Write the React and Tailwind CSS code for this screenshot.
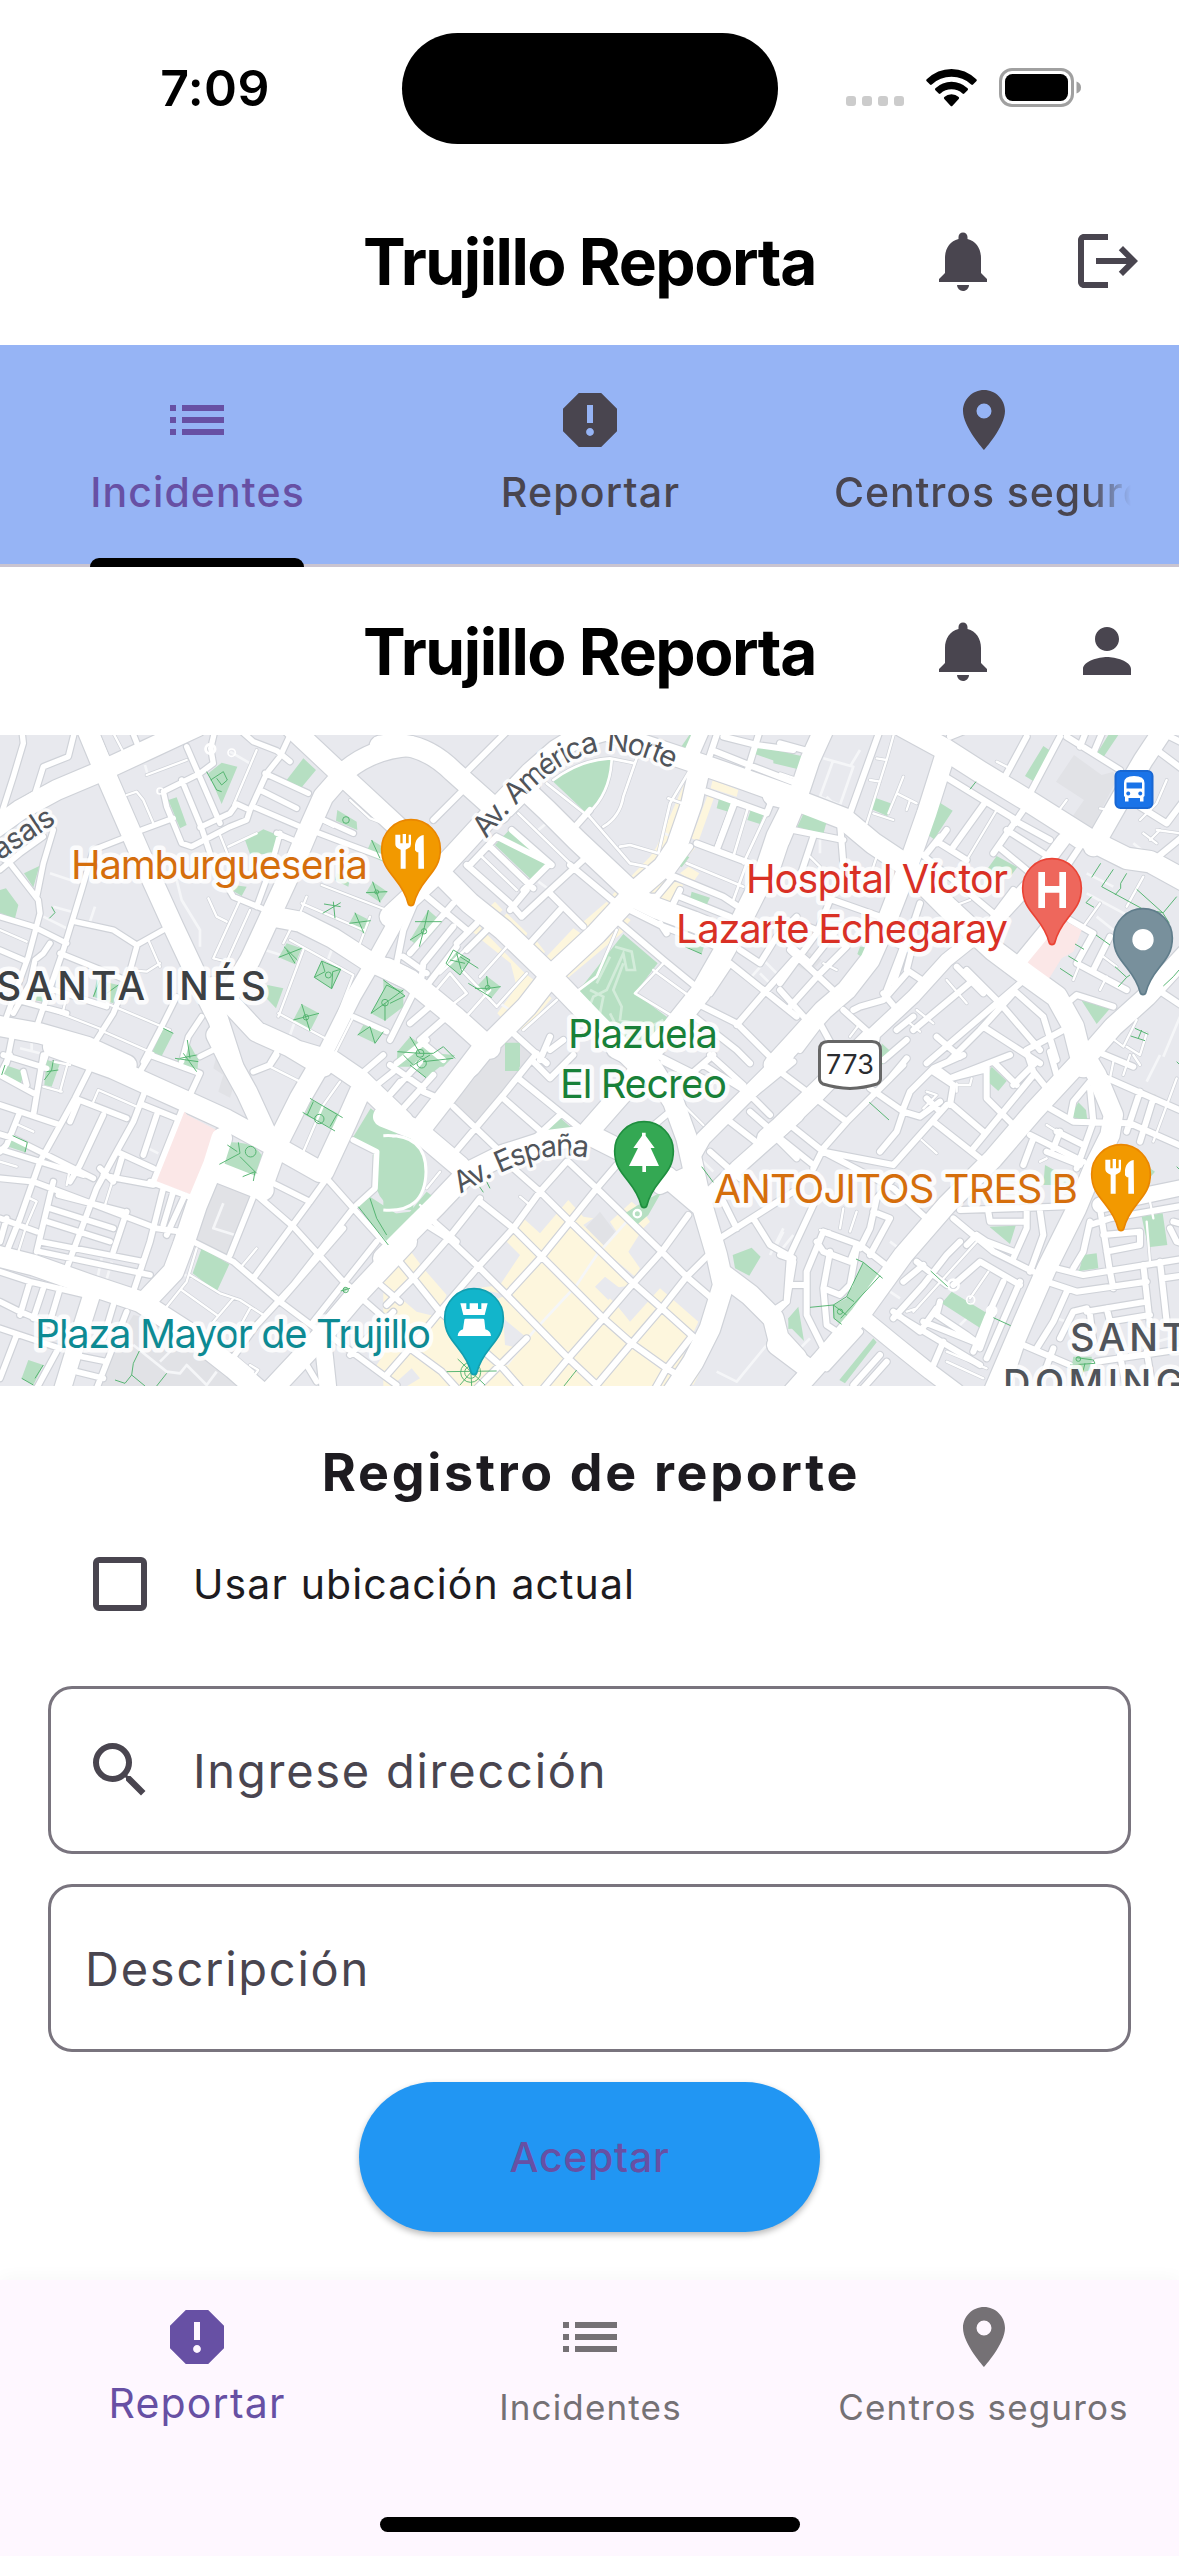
import {
  MdList,
  MdLocationOn,
  MdLogout,
  MdNotifications,
  MdPerson,
  MdReport,
  MdSearch,
} from "react-icons/md";

/*
 * City map. Each tile is drawn on its own grid, three units per screen pixel,
 * and placed at (x, y) inside the map view.
 * roads: [width, path]   parks / shops / clinics / plots: filled areas
 * alleys: faint streets  paths: footpaths inside parks
 */
const TILES = [
  {
    x: 0,
    y: -5,
    roads: [
      [60, "M262 0 320 140 420 370 520 590 600 760 655 870 700 1010 M-30 305 60 240 170 180 300 125 440 60 590 -10 M860 -20 1020 130 1220 315 M1230 48Q1120 55 1040 120 M1040 120 970 200 925 300 870 430 810 560 750 690 690 790 M640 770 700 830 770 905 870 950 970 1010 M820 560 900 575 1000 625 1100 690 1210 740 M-20 885 120 910 260 950 380 1005"],
      [44, "M1230 500 1130 680 1060 800 955 1010"],
      [16, "M65 -5 70 40 40 140 0 265 M225 0 205 80 130 110 105 190 40 230 0 300 M395 0 425 75 M425 300 520 265 M560 50 660 280 M645 0 632 55 640 100 600 130 490 185 500 230 545 340 575 350 690 290 740 270 750 240 800 130 840 80 875 5 M600 292 690 250 710 222 745 238 M720 0 760 35 830 62 870 95 M760 230 900 290 M795 130 925 190 M780 180 890 235 M945 305 1010 330 1210 405 M545 150 605 295 640 400 700 500 785 535 M840 310 810 420 770 530 M830 310 890 335 M225 575 340 600 410 645 490 600 M160 300 130 400 110 500 M0 380 30 400 115 510 120 550 85 680 20 860 M370 325 280 360 245 480 190 660 110 890 M0 560 100 590 200 640 M150 640 130 670 105 690 90 760 40 850 M410 650 385 740 340 850 280 945 M180 670 390 755 M0 660 70 690 M130 770 320 830 M50 810 200 850 M530 800 490 880 430 995 M605 860 565 920 545 995 M0 420 60 370 130 320 M960 265 1060 310 M1060 860 1160 905 M40 900 20 1000 M150 940 130 1000 M840 950 810 1000 M660 950 600 980"],
      [7, "M290 0 330 95 M335 0 380 85 M440 135 560 90 M380 195 410 185 430 210 460 280 M770 60 700 225 M660 315 690 390 M685 350 770 310 M0 600 80 635 M445 630 480 710 M385 720 440 725 480 700 M905 520 1090 600 M965 465 1160 540 M900 550 920 500 M850 640 870 600 M870 630 1060 735 M910 660 835 860 M835 850 985 930 1060 735 M200 800 190 840 M320 820 510 900 M130 830 310 900 M300 900 460 970 M940 260 1000 290 M1050 210 1110 265 1150 280 M720 510 640 685 680 695 750 540 M625 505 650 560 680 575 M1080 640 1110 560 M990 1000 1060 860"],
    ],
    alleys: "M435 105 445 140 M690 65 750 100 M150 430 240 460 M285 530 270 575 M530 450 545 510 600 600 600 650 M160 530 215 545 M130 560 210 600 M60 955 120 970 M95 930 95 960 M795 660 860 680 M995 660 980 700 M890 860 870 915",
    parks: "M665 98 712 110 665 222 625 130Z M910 85 948 120 905 172 860 150Z M505 210 530 202 560 285 540 295Z M790 298 840 318 820 372 750 372 735 330Z M0 480 18 475 55 525 45 565 0 548Z M72 430 118 408 100 472Z M1012 240 1070 275 1072 300 1008 272Z M1115 330 1180 370 1150 395 1098 370Z M1118 455 1162 485 1140 517 1098 488Z M1065 548 1112 572 1092 610 1048 580Z M860 640 905 655 885 703 836 682Z M965 693 1022 718 995 776 943 742Z M802 765 850 775 828 835 795 800Z M905 822 957 850 930 903 880 870Z M1160 765 1210 780 1210 830 1155 872 1113 850Z M1090 885 1150 905 1125 940 1073 915Z M490 895 520 910 485 978 458 965Z M562 930 592 985 540 990Z M700 465 740 470 725 498 695 480Z M290 750 355 765 340 820 280 800Z M105 770 130 775 130 815 100 810Z M1010 430 1050 445 1045 470 1005 450Z",
    paths: "M620 125 650 180 665 185 M632 150 670 125 682 150 665 165 650 145 M1115 330 1140 385 M1098 488 1162 485 M1118 455 1140 517 M972 522 1022 530 M1000 515 1005 565 M968 550 1022 518 M1048 580 1112 572 M1065 548 1092 610 M836 682 905 655 M860 660 885 700 M852 650 892 690 M943 742 965 693 1022 718 995 776Z M965 693 975 725 943 742 M1022 718 998 725 995 776 M880 870 957 850 M905 822 930 903 M1113 850 1160 765 1200 785 M1113 850 1155 820 1210 780 M1155 820 1155 872 M1073 915 1110 890 1125 940 1150 905 M155 530 165 548 148 565 M490 895 520 910 M540 985 590 975 M562 930 570 985 M280 800 300 750 M320 790 355 765",
    rings: [[985, 735, 9], [1155, 818, 10], [1130, 486, 6], [918, 862, 8], [1038, 270, 10]],
    whiteRings: [[631, 57, 14, 9], [695, 68, 11, 5], [480, 183, 9, 5]],
  },
  {
    x: 390,
    y: -5,
    roads: [
      [62, "M-30 48Q90 25 190 125L330 250 M0 560 140 430 210 355 320 235 420 130 500 60 590 5 M660 5 760 45 880 85 1040 140 1220 205 M140 420 240 520 340 600 480 735 620 880 740 1000 M390 165 470 240 560 330 640 405 730 490 M730 500 800 535 910 575 1020 620 M930 110 905 220 860 350 820 410 740 480 620 610 480 740 410 830 280 960 240 1010 M1220 200 1160 320 1120 440 1060 560 1010 650 930 790 850 890 750 1000 M-10 715 60 750 200 865 300 955"],
      [46, "M900 80 935 0 M540 40 660 5"],
      [18, "M360 250 440 170 M225 130 350 5 M130 270 215 185 M560 285 600 240 M320 320 480 400 400 480 M365 300 485 405 M300 350 430 475 M235 410 320 320 M230 405 360 520 395 560 470 490 590 380 M540 405 690 530 M480 490 580 590 M360 540 410 480 M420 640 510 540 M110 500 230 600 M60 670 190 520 M200 640 260 580 M40 600 70 530 M20 700 40 600 M40 680 110 730 M95 740 100 700 190 590 M230 660 290 600 M100 780 200 650 M965 60 1090 110 1220 160 M985 0 955 90 M1110 0 1070 130 M1000 20 1100 45 1210 60 M950 185 1130 250 1150 200 M920 340 1080 400 M855 440 1000 500 1060 540 M835 440 900 350 M850 440 800 500 770 500 M980 360 1035 215 M685 575 820 690 930 780 M720 540 820 590 980 650 M830 610 810 580 M870 500 1020 560 M870 480 850 520 M1050 660 1110 700 1160 620 1220 560 M900 850 1040 960 1080 1000 M920 820 1040 880 1150 990 M1020 700 1220 860 M960 790 1020 700 M1040 885 1130 780 1210 690 M0 930 70 790 M60 880 130 820 M90 930 170 860 M100 940 160 990 M20 1000 110 930 M370 910 470 1000 M480 960 520 930 M450 990 480 920"],
      [8, "M385 250 550 410 M270 375 380 480 M470 160 590 255 560 290 M590 250 720 400 770 410 M490 150Q570 90 660 85L735 100 M665 90Q660 190 595 250 M740 85 700 200 Q690 260 640 290 M690 350 720 345 805 370 840 220 900 120 M835 205 890 225 M1030 210 975 360 M1075 230 1030 380 M1130 250 1060 400 M150 730 235 650 M130 790 180 730 230 790 180 830 M215 720 320 830 M220 870 300 780 M270 740 360 640 M320 830 410 730 M400 900 500 810 M890 400 1060 470 M1030 510 1070 400 M560 785 620 740 680 600 M820 700 735 790 850 860 M790 720 900 800"],
    ],
    alleys: "M445 300 475 275 M445 455 480 480 M330 820 360 840 M1085 740 1120 700 M1110 680 1170 740 M1110 730 1150 770 M825 310 850 325",
    parks: "M490 155Q560 88 668 88Q660 190 588 248Z M360 298 468 400 425 450 315 345Z M898 15 930 15 912 65 875 48Z M1105 50 1210 75 1210 112 1095 72Z M988 202 1028 212 1015 245 980 235Z M1082 240 1122 250 1110 282 1072 270Z M905 485 960 503 945 535 898 515Z M878 370 898 382 875 412 858 400Z M115 540 155 575 88 650 60 630Z M190 660 240 690 210 735 168 700Z M290 738 332 770 305 803 255 775Z M-20 750 45 798 -20 850Z M345 938 390 938 390 1010 345 1010Z M60 920 130 970 195 975 160 1010 20 1010 22 965Z M895 612 945 640 935 672 880 645Z M700 612 803 700 735 790 832 862 790 930 740 960 610 850 560 790Z",
    shops: "M900 125 925 130 885 280 820 370 745 450 722 440 780 380 800 350 870 190Z M968 150 1045 180 1040 200 962 175Z M955 190 975 195 925 335 905 325Z M900 345 915 355 850 425 838 415Z M870 430 895 410 928 430 910 455Z M830 432 842 442 785 500 768 488Z M855 455 880 465 840 530 800 512Z M733 525 818 575 815 590 715 545Z M700 555 722 570 705 590 685 575Z M315 515 338 540 320 556 297 532Z M350 550 412 610 402 632 332 570Z M430 620 465 665 455 680 412 642Z M550 595 575 612 485 710 460 690Z M650 515 660 525 590 595 572 582Z M680 480 694 492 680 508 664 498Z M255 575 275 595 260 615 240 600Z M290 612 405 730 438 755 340 870 322 850 380 770 362 700 275 630Z M690 595 700 605 520 755 515 745 600 650Z M475 795 485 805 400 905 388 895Z",
    plots: "M240 990 370 910 450 970 420 1010 240 1010Z",
    paths: "M115 540 100 605 60 630 M75 575 155 575 M100 605 88 650 M168 700 190 660 240 690 210 735Z M180 690 225 700 M200 670 215 725 M210 680 265 715 M235 760 305 803 M290 738 295 775 332 770 M255 775 295 775 M-20 750 45 798 0 820 M60 920 90 970 22 965 M90 970 130 970 160 950 195 985 M885 650 935 672 M890 630 945 645",
    rings: [[102, 604, 8], [293, 773, 7], [90, 970, 12]],
    parkAlleys: "M675 650 725 665 735 720 710 720 700 670 650 780 610 800 590 850 M700 700 670 780 695 830 690 870 780 890 820 870 M660 680 620 760 M600 780 640 800 630 850 M660 850 680 890 720 920 M600 820 560 800",
  },
  {
    x: 780,
    y: -5,
    roads: [
      [64, "M370 -10 490 55 600 125 740 210 850 280 930 330 1040 385 1110 395 1220 455 M-20 195 60 215 190 265 280 340 370 400 500 530 640 660 740 735 830 800 880 890 910 1010"],
      [58, "M140 -20 90 90 50 210 0 330 M500 60 440 250 380 420 310 600 270 690 200 780 130 840 40 940 -20 1005 M1150 0 1090 90 1020 210 940 350 M1220 670 1100 800 1000 890 930 970 900 1010"],
      [40, "M850 330 760 450 650 570 500 690 400 800 250 940 M830 560 715 700"],
      [18, "M0 40 90 65 M300 0 210 250 M480 130 700 265 M560 0 510 20 M740 20 670 150 M840 20 750 190 M860 20 1020 120 M920 0 900 50 M970 0 940 70 M1130 60 1210 120 M1150 10 1210 40 M730 240 640 370 M680 300 790 370 M700 270 810 330 M655 350 740 420 M480 340 560 390 M610 225 520 350 M500 300 470 340 M410 360 520 450 640 550 M480 320 440 370 M700 480 640 560 M40 300 190 330 M180 280 190 400 M100 320 60 440 M30 300 -10 420 M130 500 300 560 M150 510 110 610 0 760 M60 580 160 620 200 650 M30 660 180 800 M0 620 90 700 170 600 M30 830 120 730 200 650 M0 780 80 870 M300 620 370 650 320 780 M420 520 340 760 M400 640 380 720 440 760 M220 840 240 830 310 810 380 730 M310 790 360 850 M190 840 280 920 M560 720 660 820 780 960 M530 710 610 790 M700 790 600 900 510 990 M700 780 790 860 830 990 M610 890 780 1000 M740 960 850 900 M470 920 540 980 M440 1000 720 760 M350 900 400 860 M580 750 400 900 M860 820 890 795 1000 830 M860 810 830 830 M870 570 940 610 890 700 1040 780 M990 620 940 720 M1120 770 1210 830 M940 960 1060 1010 M60 960 120 880 180 990 M1110 400 1220 310 M1080 230 1160 280 1220 200 M870 330 900 350 860 410 M310 990 380 930"],
      [7, "M345 0 320 90 260 280 M290 85 320 90 M270 150 300 155 M370 140 350 190 410 220 M350 190 325 250 M390 210 380 240 M280 250 340 270 M650 95 690 115 M860 210 830 250 M960 235 985 240 M0 130 60 150 M650 240 560 390 M290 380 270 440 M90 380 120 410 110 440 M160 500 200 420 M1090 440 1040 530 M960 520 910 590 M960 780 980 740 M880 750 900 700 M970 680 1010 710 M990 920 1030 950 1070 870 M1040 950 1080 975 1100 910 M500 750 560 820 M410 840 460 880 M390 880 420 905 M210 920 240 880 M1080 270 1130 220 1160 150 M1090 310 1130 340 M1130 300 1200 310 M1110 330 1140 300 M130 700 170 720 M490 540 570 510"],
    ],
    alleys: "M160 90 120 200 180 225 220 110 130 85 M240 60 210 110 M140 200 160 220 M120 320 120 370 M1060 340 1110 380 M920 430 1000 470 M920 490 1050 560 M950 560 1000 600 M1200 860 1150 980",
    parks: "M-20 60 75 80 55 118 -20 100Z M790 48 820 68 768 158 735 138Z M985 15 1015 15 968 85 948 75Z M285 203 332 220 322 258 275 238Z M70 252 140 275 130 312 52 290Z M470 212 518 242 462 328 435 308Z M650 378 712 412 690 440 620 420Z M240 650 258 650 248 683 232 672Z M905 812 988 838 950 882Z M305 940 338 970 305 1005Z",
    clinics: "M850 570 905 600 880 665 845 685 803 752 738 702 780 630Z",
    plots: "M882 75 965 135 1000 125 1010 150 930 305 870 270 912 210 828 155Z M75 660 125 690 90 730 40 700Z",
    paths: "M588 155 570 178 M962 400 935 442 M1000 418 965 470 1090 538 1150 548 1190 500 M1040 430 1022 460 1022 475 1005 495 M1070 478 1148 548 1168 580 M935 500 918 518 942 532 M885 642 912 658 M865 678 893 695 M840 715 878 740 M948 615 990 645 M1005 710 1040 742 1015 770 M1050 735 1040 742 M1197 720 1180 740 1150 768 M1065 895 1105 913 M1052 918 1095 932 M1085 900 1075 925",
  },
  {
    x: 0,
    y: 320,
    roads: [
      [62, "M160 -25 340 40 460 95 560 140 680 195 800 260 960 350 M650 -60 690 20 740 110 800 240 M970 10 900 130 835 260 785 400 M1080 110 1040 200 970 350 M900 -10 1000 20 1080 75 1210 200 M-20 600 100 630 270 690 420 740 560 830 700 940 780 1010 M665 250 640 330 590 450 550 570 520 650 435 740 M650 350 790 405 M1220 560 1060 730 950 860 800 1020"],
      [50, "M275 720 240 830 185 1010 M970 870 985 1010"],
      [17, "M10 0 140 40 M130 0 100 180 M0 60 110 120 M70 50 80 90 M30 0 0 60 M0 150 60 170 180 210 M60 170 20 270 0 290 M-10 235 40 250 280 370 M280 20 225 130 120 320 60 490 20 590 M225 130 380 190 M235 140 210 200 M310 180 240 330 210 380 M-10 280 120 320 250 360 M0 370 100 380 260 440 470 520 540 530 M440 95 400 200 350 290 290 400 230 560 200 640 M430 150 530 190 M470 180 430 300 M350 290 460 340 M365 310 350 360 M310 360 350 370 460 390 M550 155 460 380 M450 380 580 430 M160 380 110 590 M175 420 370 470 M150 460 340 520 M140 500 330 560 M120 560 430 620 M120 590 450 660 M300 340 340 380 M490 400 450 560 400 710 M550 430 500 540 M520 410 490 510 M380 470 340 590 M0 490 110 530 M20 490 0 560 M0 650 90 680 260 720 M90 680 60 780 M130 700 100 790 M180 700 150 800 M0 740 60 770 250 850 M0 820 180 880 M50 840 0 970 M170 890 110 1000 M220 900 320 920 M230 950 310 970 M340 750 310 850 M380 770 290 1000 M770 420 880 515 1030 680 1080 720 M770 400 690 600 M800 375 930 440 M930 440 980 370 M980 370 1060 460 1150 560 M1060 460 880 690 770 810 690 920 M930 440 760 670 M580 560 700 620 840 740 960 830 M840 740 1030 520 M1130 560 940 800 M1060 255 1130 290 1125 400 1070 450 M420 50 450 0 600 55 570 120 M760 50 810 30 830 0 M1000 0 1080 60 1150 0 M1160 130 1200 80 M1130 90 1180 50 M1000 850 1190 990 M1050 900 1180 770 M1085 730 1200 830 M1130 680 1200 740 M920 930 950 980"],
      [7, "M210 0 180 110 M160 20 210 30 M130 95 185 110 M280 140 295 105 410 155 M810 35 900 80 M1020 80 970 150 M970 150 910 290 M340 370 315 450 M90 430 110 440 80 510 55 590 M45 205 100 230 M0 320 50 335 M590 580 560 680 480 780 M545 705 650 780 M570 660 660 715 720 735 790 780 M700 730 640 800 M750 760 700 850 M770 580 720 640 M210 340 200 390 M700 900 760 950 M750 930 775 945 760 965"],
    ],
    alleys: "M435 275 475 295 M670 445 640 520 705 540 M305 610 290 680 M335 620 315 690 M540 655 580 670 M480 920 540 860 M400 870 500 950 540 955 560 930 620 990 650 950 M330 890 400 870",
    parks: "M15 30 75 50 60 90 5 60Z M140 15 180 25 155 95 133 90Z M530 15 560 -5 595 10 592 55Z M38 242 82 262 75 292 25 275Z M690 262Q760 260 785 300L760 378 658 335Z M935 135 1022 180 1005 225 915 180Z M1112 160 1198 230 1130 285 1060 245Z M1120 300Q1150 240 1240 240V465Q1120 470 1125 350Z M1075 455 1110 425 1210 490 1168 570Z M605 580 688 628 650 710 578 655Z M85 915 130 930 100 990 65 970Z M1020 700 1050 690 1040 720Z",
    shops: "M1180 625 1210 640 1210 690 1165 650Z M1180 755 1210 770 1210 1010 1165 985 1120 945 1150 900 1165 850 1155 790Z",
    clinics: "M548 163 562 180 655 228 575 420 462 378Z",
    plots: "M650 375 755 420 685 600 585 555Z M650 0 705 80 690 128 655 110 670 60 640 40Z M400 780 450 790 700 960 760 1010 290 1010 330 900Z",
    paths: "M160 15 155 45 133 75 M140 50 175 45 M15 30 5 60 M38 242 82 262 75 292 M658 328 720 295 715 262 M682 270 712 290 M720 305 770 355 M728 365 765 350 760 378 M930 130 1028 188 M908 172 1005 228 M940 140 922 180 M1010 180 990 215 M1075 455 1165 570 M1110 430 1130 490 1160 540 M525 10 595 20 M550 -5 590 50 M418 888 400 925 395 960 435 993 M395 960 375 985 345 975 M500 955 470 993 M130 930 105 970 M65 970 100 990 M1022 708 1050 700",
    rings: [[752, 290, 16], [958, 192, 14], [1037, 705, 8]],
  },
  {
    x: 390,
    y: 320,
    roads: [
      [62, "M-20 185 80 225 210 335 M-20 610 60 530 140 450 230 355 340 300 480 255 600 240 700 290 830 365 930 450 M590 235 700 110 760 30 M680 -20 780 30 850 140 890 250 930 430 980 600 1000 690 960 820 910 920 850 1010 M270 -10 190 95 85 230 M1000 660 1080 720 1150 790 1165 850 1220 910"],
      [44, "M1190 0 1080 110 940 250 900 320 M1220 180 1040 340 940 440 M810 395 910 350"],
      [18, "M535 320 620 400 815 590 890 665 960 725 M370 340 450 410 540 500 730 685 815 760 910 845 M270 440 370 520 455 605 640 790 725 865 830 940 880 970 M110 510 175 550 265 635 350 720 535 910 620 990 M20 610 70 670 150 770 330 930 400 1010 M-10 820 60 880 155 950 200 1000 M680 330 620 400 540 500 455 605 350 720 M530 320 450 410 370 520 265 635 150 770 60 880 -10 960 M270 430 175 550 70 670 -10 750 M895 480 815 590 730 685 640 790 535 910 460 1000 M955 600 890 665 815 760 725 865 620 990 M905 845 830 940 790 1010 M120 490 200 560 M340 130 500 270 M385 70 570 220 M440 -5 340 120 180 310 M190 155 320 280 M510 180 440 245 M840 170 780 220 M0 30 100 100 M-10 130 90 20 M100 110 170 140 M30 170 130 60 M800 0 960 80 M820 20 900 60 M940 30 1070 110 1140 180 M960 0 1060 90 M900 60 970 0 M950 240 1100 110 1210 20 M1020 200 1110 270 M1080 170 1160 240 M990 550 1210 410 M1090 490 1140 570 1210 610 M1210 620 1190 740 1160 770 M960 290 1050 370 M1160 250 1220 310 M1000 440 1040 520 M430 20 480 70 550 0 M410 850 330 930 260 1000 M260 870 330 930"],
      [7, "M390 425 420 450 M870 140 940 210 M150 350 110 400 M90 450 120 480"],
    ],
    alleys: "M710 500 620 600 560 690 430 830 350 930 M1180 520 1140 600 M1130 870 1040 980 980 950 M930 310 970 350",
    parks: "M510 188 558 230 560 245 440 240Z M-20 250Q105 235 108 350Q105 470 -20 462Z M110 410 130 425 0 560 -20 560 -20 480 60 470Z M1085 578 1112 605 1078 662 1035 640 1028 600Z M25 0 195 0 108 68Z M345 -5 388 -5 388 48 345 48Z M815 410 775 480 740 510 705 475 760 440Z M1195 790 1220 780 1220 820 1195 822Z",
    shops: "M535 435 580 485 610 490 580 510 660 590 645 590 540 505 450 610 350 720 260 700 330 690 390 600 345 555 370 525 400 490 450 535Z M545 500 645 590 740 690 660 700 620 690 680 750 720 800 810 700 925 800 830 1010 -20 1010 -20 900 60 850 150 770 200 780 350 720 450 605Z M725 440 760 470 780 500 760 520 715 590 750 640 735 665 640 585 680 530 660 500Z M55 580 100 640 170 720 150 770 20 610Z M10 620 60 670 20 720 80 770 160 790 60 870 -20 800 -20 650Z M960 850 975 860 910 990 890 980Z",
    plots: "M310 0 420 0 260 210 185 155Z M630 470 675 530 640 585 575 530Z",
    blocks: "M645 665 690 700 655 735 615 695Z M715 700 765 745 720 795 680 750Z M340 790 412 850 390 880 345 870Z M65 940 90 970 40 1000 20 980Z",
    paths: "M170 950 320 948 M203 912 285 990 M240 900 245 993 M210 990 270 920 M560 945 522 993 M935 335 970 382 M265 390 280 412 M290 380 300 400 M40 0 70 30 120 0 M100 20 190 10 M60 30 108 68",
    rings: [[242, 952, 30], [242, 952, 18], [95, 25, 14]],
    whiteRings: [[742, 476, 11, 7]],
    track: "M-20 242Q108 235 108 350Q105 475 -20 465",
  },
  {
    x: 780,
    y: 320,
    roads: [
      [58, "M270 -50 120 100 0 215 -40 250 M890 30 760 170 640 310 500 450 370 600 240 780 130 910 40 1010 M890 -40 950 60 1000 180 990 240 940 340 890 460 800 640 730 800 640 1010 M-10 870 90 945"],
      [46, "M240 780 350 870 450 950 530 1010 M960 450 1100 420 1220 395"],
      [18, "M540 465 700 460 900 452 M0 50 120 140 200 200 130 280 M30 210 130 290 340 330 M130 280 100 340 M130 290 340 400 450 500 M340 330 500 150 M200 200 330 70 380 10 M120 130 210 30 M270 100 370 170 350 230 300 290 M0 250 100 330 M290 110 370 30 M370 160 390 110 460 40 550 0 M370 170 420 185 480 140 M460 50 520 90 510 150 M470 40 510 70 610 45 M510 70 690 0 M440 130 480 170 M620 30 620 130 700 210 M640 20 710 90 M700 90 770 20 M740 -10 760 50 800 100 M810 -10 830 60 M460 200 600 310 M510 145 610 230 M580 280 760 60 M810 160 880 200 1050 205 1220 280 M960 60 1210 170 M930 80 880 140 870 190 M930 100 940 200 890 340 M1080 110 1040 230 M1120 130 1080 260 M750 240 910 320 M760 250 730 330 M840 230 820 280 M830 230 910 270 M800 290 900 330 M120 400 100 450 30 600 20 740 -10 760 M30 690 80 690 M0 600 30 610 M130 530 80 650 80 780 130 880 M130 530 240 570 330 640 M230 570 210 620 130 590 M130 590 110 560 M150 590 130 700 180 720 210 690 230 580 M130 700 140 810 200 850 M280 470 330 490 270 600 M290 430 270 520 240 580 M340 370 290 430 M520 490 640 590 760 650 M625 470 630 500 740 500 M740 470 740 520 700 610 M780 470 790 540 750 650 M590 540 620 560 700 590 M540 560 500 600 430 690 340 790 M590 540 560 570 M430 630 370 680 M410 620 500 690 M520 690 600 620 720 690 M670 680 620 790 580 890 M480 740 470 780 560 840 600 870 M340 770 420 830 470 760 M430 800 580 860 M350 780 600 930 M490 860 460 930 M640 770 600 880 M720 680 620 910 M960 460 990 650 1000 700 M930 500 910 590 880 640 M930 510 990 490 1220 450 M970 540 1080 530 1080 570 980 590 M830 640 910 660 1220 610 M800 680 890 710 1100 680 M860 710 820 800 770 880 M920 770 1100 740 M880 770 840 850 M880 770 920 760 M930 780 940 860 M1090 630 1110 810 M1140 620 1160 800 M980 760 990 800 M990 800 1110 780 M1150 670 1220 660 M1170 520 1190 560 1220 570 M730 870 870 930 M820 880 790 960 M1180 500 1220 510 M720 880 680 1000 M140 940 240 830 M320 920 240 1010 M220 990 300 900 M950 920 1220 880 M1020 900 1040 1010 M940 930 960 1010 M1100 890 1120 1010"],
      [7, "M430 160 470 120 440 110 M520 90 570 90 M530 110 530 85 M570 90 575 70 M425 255 470 295 M800 210 840 235 M780 320 800 310 M180 520 190 460 M210 530 230 470 M120 525 150 530 M400 770 590 560 M410 760 380 770 M570 730 625 650 M1080 30 1060 0 M1030 60 1050 0 M1190 70 1120 260 M990 70 1000 20 M1110 440 1120 490 M1100 500 1110 620 M500 920 610 970 M500 890 620 940"],
    ],
    alleys: "M0 590 40 540 M-10 570 10 530 M330 560 370 590 M330 710 360 730 M540 810 560 790 M60 880 90 850 M830 790 860 800 M1140 0 1100 80 M1130 860 1200 840",
    parks: "M635 35 680 78 655 108 618 75Z M300 0 340 0 310 18Z M895 142 918 165 922 196 870 185Z M795 330 850 360 880 350 870 390 790 390Z M628 515 707 512 690 567Z M1085 485 1148 475 1162 570 1105 577Z M910 600 950 595 955 640 897 648Z M250 622 303 662 182 808 160 790 160 750 200 730Z M55 755 72 858 30 815 25 790Z M280 850 290 862 195 985 178 975Z M515 710 630 780 605 822 485 745Z M880 905 935 905 935 945 870 960Z M1110 340 1125 350 1112 365Z M1197 820 1210 820 1210 855 1190 855Z",
    paths: "M228 612 250 622 308 670 M250 622 200 725 160 750 90 757 M300 662 182 790 M160 750 162 790 185 808 M160 750 200 780 M200 725 222 740 M268 142 327 195 M452 648 503 695 M640 788 692 812 M890 908 940 915 945 925 870 930 M915 925 905 965 M1190 335 1200 345 M1190 20 1200 30",
    rings: [[180, 770, 8], [895, 912, 7]],
    whiteRings: [[520, 690, 16, 8], [572, 735, 12, 5], [635, 768, 14, 8]],
  },
];

const PINS = [
  { x: 411, y: 114, fill: "#f29900", stroke: "#ea8600", glyph: "food" },
  { x: 1052, y: 153, fill: "#ee675c", stroke: "#ea4335", glyph: "hospital" },
  { x: 1143, y: 203, fill: "#78909c", stroke: "#607d8b", glyph: "dot" },
  { x: 644, y: 416, fill: "#34a853", stroke: "#1e8e3e", glyph: "tree" },
  { x: 1121, y: 439, fill: "#f29900", stroke: "#ea8600", glyph: "food" },
  { x: 474, y: 583, fill: "#12b5cb", stroke: "#129eaf", glyph: "tower" },
];

const LABELS = [
  { text: "Hamburgueseria", x: 71, y: 144, w: 297, size: 40, color: "#d56e0c" },
  { text: "Hospital Víctor", x: 746, y: 157.5, w: 262, size: 40, color: "#d93025" },
  { text: "Lazarte Echegaray", x: 676, y: 207.5, w: 332, size: 40, color: "#d93025" },
  { text: "Plazuela", x: 568, y: 313, w: 150, size: 40, color: "#188038" },
  { text: "El Recreo", x: 560, y: 363, w: 167, size: 40, color: "#188038" },
  { text: "ANTOJITOS TRES B", x: 714, y: 468, w: 364, size: 40, color: "#d56e0c" },
  { text: "Plaza Mayor de Trujillo", x: 35, y: 612.5, w: 396, size: 40, color: "#0d8a93" },
];

function Glyph({ name }) {
  if (name === "food")
    return (
      <path
        fill="#fff"
        d="M-47-43v28q0 10 10 14l6 3v57h15V2l8-4q8-4 8-13v-28h-7v26h-8v-28h-10v28h-7v-26ZM38-42C20-40 12-22 12-8V4l6 6h4v49h17Z"
      />
    );
  if (name === "hospital") return <path fill="none" stroke="#fff" strokeWidth="20" d="M-31-48V60M32-48V60M-31 4H32" />;
  if (name === "dot") return <circle r="32" cy="5" fill="#fff" />;
  if (name === "tree")
    return <path fill="#fff" d="M-6-55H5V-46L32-9H20L45 45H6V63H-5V45H-45L-18-9H-32L-6-46Z" />;
  return (
    <path
      fill="#fff"
      d="M-41-44h18v17h10v-17h25v17h10v-17h19l-9 35h-64ZM-25 2h52q4 0 4 4l3 28q16 5 17 20H-49q1-15 16-20l4-28q0-4 4-4Z"
    />
  );
}

function CityMap() {
  return (
    <svg
      className="block h-[651px] w-[1179px] shrink-0 font-['Inter',sans-serif]"
      viewBox="0 0 1179 651"
      role="img"
      aria-label="Mapa de Trujillo"
    >
      <defs>
        <path id="america" d="M486 104Q512 72 537 50Q563 27 588 19Q620 9 672 34L720 58" />
        <path id="espana" d="M460 459Q497 438 520 430Q556 416 588 423L640 434" />
        <path id="casals" d="M-17 137L90 65" />
      </defs>
      <rect width="1179" height="651" fill="#e8e9ee" />
      {TILES.map((t) => (
        <g key={`a${t.x}-${t.y}`} transform={`translate(${t.x} ${t.y}) scale(0.33333)`}>
          {t.plots && <path d={t.plots} fill="#e1e2e6" />}
          {t.shops && <path d={t.shops} fill="#fdf6dd" />}
          {t.blocks && <path d={t.blocks} fill="#e8e9ee" />}
          {t.alleys && <path d={t.alleys} fill="none" stroke="#f5f6f8" strokeWidth="8" strokeLinejoin="round" />}
        </g>
      ))}
      {TILES.map((t) => (
        <g
          key={`b${t.x}-${t.y}`}
          transform={`translate(${t.x} ${t.y}) scale(0.33333)`}
          fill="none"
          stroke="#cfd2d8"
          strokeLinejoin="round"
        >
          {t.roads.map(([w, d]) => (
            <path key={w} d={d} strokeWidth={w + (w > 12 ? 7 : 4)} strokeLinecap="round" />
          ))}
        </g>
      ))}
      {TILES.map((t) => (
        <g key={`c${t.x}-${t.y}`} transform={`translate(${t.x} ${t.y}) scale(0.33333)`}>
          <path d={t.parks} fill="#b6dfc2" />
          {t.clinics && <path d={t.clinics} fill="#fbe7e7" />}
          {t.parkAlleys && <path d={t.parkAlleys} fill="none" stroke="#d3ecda" strokeWidth="8" />}
        </g>
      ))}
      {TILES.map((t) => (
        <g
          key={`d${t.x}-${t.y}`}
          transform={`translate(${t.x} ${t.y}) scale(0.33333)`}
          fill="none"
          stroke="#fff"
          strokeLinejoin="round"
        >
          {t.roads.map(([w, d]) => (
            <path key={w} d={d} strokeWidth={w} strokeLinecap="round" />
          ))}
          {t.track && <path d={t.track} strokeWidth="9" />}
          {(t.whiteRings || []).map(([cx, cy, r, w]) => (
            <circle key={`${cx}-${cy}`} cx={cx} cy={cy} r={r} strokeWidth={w} />
          ))}
        </g>
      ))}
      {TILES.map((t) => (
        <g
          key={`e${t.x}-${t.y}`}
          transform={`translate(${t.x} ${t.y}) scale(0.33333)`}
          fill="none"
          stroke="#4fb26c"
          strokeWidth="2.8"
        >
          <path d={t.paths} />
          {(t.rings || []).map(([cx, cy, r]) => (
            <circle key={`${cx}-${cy}-${r}`} cx={cx} cy={cy} r={r} />
          ))}
        </g>
      ))}

      <g stroke="#fff" strokeOpacity="0.85" strokeLinejoin="round" paintOrder="stroke">
        <g fill="#50545a" strokeWidth="7" fontSize="29.5">
          <text letterSpacing="-2.3" wordSpacing="3">
            <textPath href="#america">Av. América Norte</textPath>
          </text>
          <text letterSpacing="-2.2" wordSpacing="3">
            <textPath href="#espana">Av. España</textPath>
          </text>
          <text letterSpacing="-0.8">
            <textPath href="#casals">Casals</textPath>
          </text>
        </g>
        <g strokeWidth="9" fontWeight="500">
          <text x="-4" y="264.5" fontSize="39" textLength="270" fill="#3c4043">SANTA INÉS</text>
          <text x="1070" y="616" fontSize="38" letterSpacing="4" fill="#50545a">SANT</text>
          <text x="1003" y="662" fontSize="38" letterSpacing="4.5" fill="#50545a">DOMING</text>
        </g>
        <g strokeWidth="9">
          {LABELS.map((l) => (
            <text key={l.text} x={l.x} y={l.y} fontSize={l.size} textLength={l.w} fill={l.color}>
              {l.text}
            </text>
          ))}
        </g>
      </g>

      <path
        d="M828 306.500H872Q880.500 306.500 880.500 315V344Q880.500 347 877 349Q864 353 850 353.500Q836 353 823 349Q819.500 347 819.500 344V315Q819.500 306.500 828 306.500Z"
        fill="#fff"
        stroke="#666"
        strokeWidth="3"
      />
      <text x="826" y="339" fontSize="27" textLength="48" fill="#2a2c2f">773</text>

      <rect x="1115.500" y="36" width="37" height="37" rx="5" fill="#1a73e8" stroke="#1967d2" strokeWidth="2" />
      <path
        fill="#fff"
        fillRule="evenodd"
        d="M1124 48Q1124 41 1134 41Q1144.500 41 1144.500 48V61L1143.500 62V66.500H1140V63H1128.500V66.500H1125V62L1124 61ZM1126.500 47.500V53.500H1142V47.500ZM1128.200 56.500A2 2 0 1 0 1128.300 56.500ZM1140.200 56.500A2 2 0 1 0 1140.300 56.500Z"
      />

      {PINS.map((p) => (
        <g key={`${p.x}-${p.y}`} transform={`translate(${p.x} ${p.y}) scale(0.33333)`}>
          <path
            d="M-88 0A88 88 0 0 1 88 0C88 42 70 62 48 90C24 120 15 138 9 162Q7 170 0 170Q-7 170 -9 162C-15 138 -24 120 -48 90C-70 62 -88 42 -88 0Z"
            fill={p.fill}
            stroke={p.stroke}
            strokeWidth="5"
          />
          <Glyph name={p.glyph} />
        </g>
      ))}
    </svg>
  );
}

function StatusBar() {
  return (
    <div className="flex h-[177px] shrink-0">
      <div className="flex w-[402px] justify-center pl-7 pt-[58px] text-[50px] font-semibold leading-[60px] tracking-[0.4px]">
        7:09
      </div>
      <div className="mt-[33px] h-[111px] w-[376px] rounded-full bg-black" />
      <div className="flex h-[39px] pl-[68px] mt-[68px]">
        <div className="flex gap-1.5 pt-7">
          {[0, 1, 2, 3].map((i) => (
            <span key={i} className="size-[10px] rounded-[3px] bg-[#cccccc]" />
          ))}
        </div>
        <svg className="ml-[22px] mt-px h-[38px] w-[51px]" viewBox="0 0 51 38">
          <path d="M25.500 0Q39.500 0 50.300 10.300Q51.300 11.300 50.300 12.300L47 15.600Q46.200 16.400 45.200 15.500Q37 7.800 25.500 7.800T5.800 15.500Q4.800 16.400 4 15.600L.7 12.300Q-.3 11.300 .7 10.300Q11.500 0 25.500 0Z" />
          <path d="M25.500 12.700Q34.700 12.700 41.600 19.200Q42.600 20.200 41.600 21.200L38.300 24.500Q37.500 25.300 36.500 24.400Q31.800 20.300 25.500 20.300T14.500 24.400Q13.500 25.300 12.700 24.500L9.400 21.200Q8.400 20.200 9.400 19.200Q16.300 12.700 25.500 12.700Z" />
          <path d="M25.500 25.300Q29.700 25.300 32.700 28.100Q33.600 29 32.700 29.900L26.500 36.700Q25.500 37.700 24.500 36.700L18.300 29.900Q17.400 29 18.300 28.100Q21.300 25.300 25.500 25.300Z" />
        </svg>
        <svg className="ml-[22px] h-[39px] w-[83px]" viewBox="0 0 83 39">
          <rect x="1.500" y="1.500" width="72" height="36" rx="11.500" fill="none" stroke="#a0a0a0" strokeWidth="3" />
          <rect x="6" y="6" width="63" height="27" rx="7.500" />
          <path d="M77.500 13.500Q82 15 82 19.500T77.500 25.500Z" fill="#a0a0a0" />
        </svg>
      </div>
    </div>
  );
}

function AppBar({ children }) {
  return (
    <header className="grid h-[168px] shrink-0 grid-cols-[1fr_auto_1fr] items-center">
      <span />
      <h1 className="pt-0.5 text-[64px] font-bold leading-none tracking-[-1.45px] text-black">Trujillo Reporta</h1>
      <div className="flex justify-end text-[#49454f]">
        <button className="flex size-36 items-center justify-center">
          <MdNotifications className="size-[72px]" />
        </button>
        <button className="flex size-36 items-center justify-center">{children}</button>
      </div>
    </header>
  );
}

function TopTabs() {
  const tab = "flex flex-col items-center px-12 pt-[39px]";
  const label = "mt-1.5 pl-0.5 text-[41px] font-medium leading-[60px]";
  return (
    <nav className="grid h-[222px] shrink-0 grid-cols-3 border-b-[3px] border-[#cac4d0] bg-[#96b4f5] text-[#49454f]">
      <div className={`${tab} text-[#6750a4]`}>
        <MdList className="size-[72px]" />
        <span className={`${label} tracking-[1.1px]`}>Incidentes</span>
        <span className="-mb-[3px] mt-9 h-[9px] w-[214px] shrink-0 rounded-t-[9px] bg-black" />
      </div>
      <div className={tab}>
        <MdReport className="size-[72px]" />
        <span className={`${label} tracking-[1.2px]`}>Reportar</span>
      </div>
      <div className={tab}>
        <MdLocationOn className="ml-0.5 size-[72px]" />
        <span className="mt-1.5 w-full overflow-hidden whitespace-nowrap text-[41px] font-medium leading-[60px] tracking-[0.9px] [mask-image:linear-gradient(to_right,black_255px,transparent_297px)]">
          Centros seguros
        </span>
      </div>
    </nav>
  );
}

function ReportForm() {
  const field = "flex h-[168px] w-full items-center rounded-3xl border-[3px] border-[#79747e] pl-[33px] pt-0.5 text-[47px] text-[#49454f]";
  return (
    <main className="flex grow flex-col items-center px-12 pt-14">
      <h2 className="pl-[3px] pt-px text-[52px] font-bold leading-[60px] tracking-[2.7px] text-[#1d1b20]">Registro de reporte</h2>
      <label className="mt-[9px] flex h-36 w-full items-center gap-[46px] pl-[45px] text-[41px] tracking-[1.1px] text-[#1d1b20]">
        <span className="size-[54px] rounded-md border-[6px] border-[#49454f]" />
        <span className="pt-0.5">Usar ubicación actual</span>
      </label>
      <div className={`${field} mt-[30px] tracking-[1.75px]`}>
        <MdSearch className="mb-0.5 mr-[37px] size-[72px]" />
        Ingrese dirección
      </div>
      <div className={`${field} mt-[30px] tracking-[1.75px]`}>
        <span className="pl-px">Descripción</span>
      </div>
      <button className="mt-[30px] h-[150px] w-[461px] rounded-full bg-[#2196f3] pt-0.5 text-[41px] font-medium tracking-[0.7px] text-[#6750a4] shadow-[0_3px_6px_rgba(0,0,0,0.28)]">
        Aceptar
      </button>
    </main>
  );
}

function BottomNav() {
  const item = "flex flex-col items-center";
  return (
    <footer className="flex h-[276px] shrink-0 flex-col items-center bg-[#fef7ff] shadow-[0_-3px_16px_rgba(0,0,0,0.03)]">
      <nav className="grid h-[237px] w-full grid-cols-3 pt-[21px] text-[35px] leading-[68px] text-[#757175]">
        <div className={`${item} text-[#6750a4]`}>
          <MdReport className="size-[72px]" />
          <span className="pl-px text-[41px] leading-[60px] tracking-[1.2px]">Reportar</span>
        </div>
        <div className={`${item} tracking-[1.15px]`}>
          <MdList className="size-[72px]" />
          <span className="pl-0.5">Incidentes</span>
        </div>
        <div className={`${item} tracking-[1.15px]`}>
          <MdLocationOn className="ml-0.5 size-[72px]" />
          <span className="pl-0.5">Centros seguros</span>
        </div>
      </nav>
      <div className="h-[15px] w-[420px] rounded-full bg-black" />
    </footer>
  );
}

export default function App() {
  return (
    <div className="flex h-[2556px] w-[1179px] flex-col overflow-hidden bg-white font-['Inter',sans-serif] text-black">
      <StatusBar />
      <AppBar>
        <MdLogout className="ml-0.5 size-[72px]" />
      </AppBar>
      <TopTabs />
      <AppBar>
        <MdPerson className="size-[72px]" />
      </AppBar>
      <CityMap />
      <ReportForm />
      <BottomNav />
    </div>
  );
}
